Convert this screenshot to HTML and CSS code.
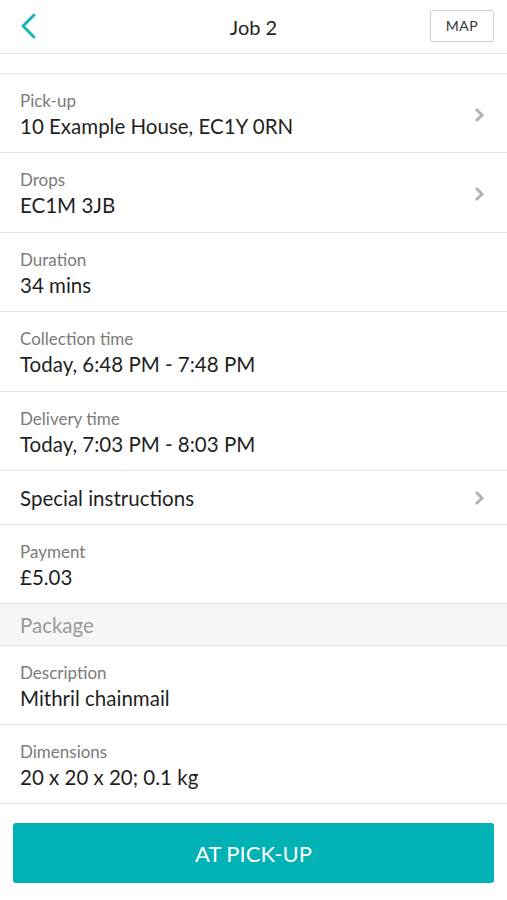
FILE: index.html
```html
<!DOCTYPE html>
<html>
<head>
<meta charset="utf-8">
<link rel="stylesheet" href="styles.css">
</head>
<body>
<div class="app">
  <header class="topbar">
    <div class="back">
      <svg width="18" height="28" viewBox="0 0 18 28"><path d="M15 3 L4 14 L15 25" fill="none" stroke="#1bb3b5" stroke-width="3" stroke-linecap="round" stroke-linejoin="round"/></svg>
    </div>
    <div class="title">Job 2</div>
    <div class="mapbtn">MAP</div>
  </header>
  <div class="spacer"></div>
  <div class="list">
    <div class="row">
      <div class="text"><div class="label">Pick-up</div><div class="value">10 Example House, EC1Y 0RN</div></div>
      <svg class="chev" width="12" height="18" viewBox="0 0 12 18"><path d="M3 3 L9 9 L3 15" fill="none" stroke="#b3b3b3" stroke-width="3"/></svg>
    </div>
    <div class="row tall">
      <div class="text"><div class="label">Drops</div><div class="value">EC1M 3JB</div></div>
      <svg class="chev" width="12" height="18" viewBox="0 0 12 18"><path d="M3 3 L9 9 L3 15" fill="none" stroke="#b3b3b3" stroke-width="3"/></svg>
    </div>
    <div class="row">
      <div class="text"><div class="label">Duration</div><div class="value">34 mins</div></div>
    </div>
    <div class="row tall">
      <div class="text"><div class="label">Collection time</div><div class="value">Today, 6:48 PM - 7:48 PM</div></div>
    </div>
    <div class="row">
      <div class="text"><div class="label">Delivery time</div><div class="value">Today, 7:03 PM - 8:03 PM</div></div>
    </div>
    <div class="row single">
      <div class="value">Special instructions</div>
      <svg class="chev" width="12" height="18" viewBox="0 0 12 18"><path d="M3 3 L9 9 L3 15" fill="none" stroke="#b3b3b3" stroke-width="3"/></svg>
    </div>
    <div class="row">
      <div class="text"><div class="label">Payment</div><div class="value">£5.03</div></div>
    </div>
    <div class="section">Package</div>
    <div class="row">
      <div class="text"><div class="label">Description</div><div class="value">Mithril chainmail</div></div>
    </div>
    <div class="row">
      <div class="text"><div class="label">Dimensions</div><div class="value">20 x 20 x 20; 0.1 kg</div></div>
    </div>
  </div>
  <div class="footer">
    <div class="cta">AT PICK-UP</div>
  </div>
</div>
</body>
</html>
```
FILE: styles.css
```css
* { box-sizing: border-box; }
html, body { margin: 0; padding: 0; background: #fff; }
body { font-family: Lato, "Open Sans", sans-serif; color: #1f1f1f; }
.app { width: 507px; }
.topbar {
  height: 54px;
  display: flex;
  align-items: center;
  justify-content: space-between;
  padding: 0 13px 0 19px;
  border-bottom: 1px solid #e3e3e3;
  position: relative;
}
.back { width: 40px; display: flex; align-items: center; margin-top: -1px; }
.title { font-size: 20px; color: #222; position: absolute; left: 0; right: 0; text-align: center; pointer-events: none; top: 15px; }
.mapbtn {
  width: 64px; height: 32px;
  border: 1px solid #cfcfcf;
  border-radius: 3px;
  font-size: 14px;
  color: #333;
  display: flex; align-items: center; justify-content: center;
  letter-spacing: 0.5px;
  margin-top: -2px;
}
.spacer { height: 20px; border-bottom: 1px solid #e3e3e3; }
.row {
  display: flex;
  align-items: center;
  justify-content: space-between;
  padding: 16px 20px 13px 20px;
  height: 79px;
  border-bottom: 1px solid #e3e3e3;
}
.row.tall { height: 80px; }
.row.single { height: 54px; padding: 0 20px; }
.label { font-size: 17px; line-height: 20px; color: #7a7a7a; }
.value { font-size: 20.5px; line-height: 26px; color: #1f1f1f; margin-top: 2px; }
.row.single .value { margin-top: 0; }
.chev { margin-right: 2px; flex: none; }
.section {
  height: 42px;
  background: #f6f6f6;
  border-bottom: 1px solid #e3e3e3;
  font-size: 20.5px;
  color: #9a9a9a;
  padding: 0 20px;
  display: flex; align-items: center;
}
.footer { padding: 19px 13px; }
.cta {
  height: 60px;
  background: #00b2b6;
  border-radius: 3px;
  color: #fff;
  font-size: 22px;
  display: flex; align-items: center; justify-content: center;
}
```
